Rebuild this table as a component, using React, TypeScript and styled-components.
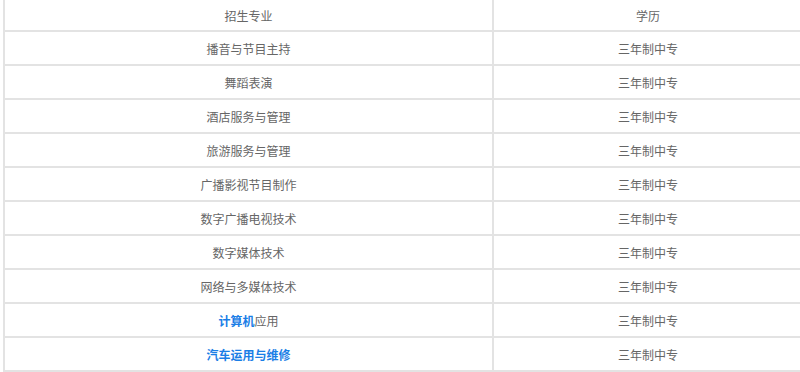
import React from "react";
import styled, { createGlobalStyle } from "styled-components";

const GlobalStyle = createGlobalStyle`
  body {
    margin: 0;
    background: #ffffff;
    font-family: "Microsoft YaHei", "Noto Sans CJK SC", sans-serif;
  }
`;

const Table = styled.div`
  margin-left: 3px;
  width: 797px;
  display: grid;
  grid-template-columns: 487px 1fr;
  border-left: 2px solid #e3e3e3;
`;

const Cell = styled.div<{ $first?: boolean; $header?: boolean }>`
  height: ${(p) => (p.$header ? 30 : 32)}px;
  display: flex;
  align-items: center;
  justify-content: center;
  border-bottom: 2px solid #e3e3e3;
  border-left: ${(p) => (p.$first ? "none" : "2px solid #e3e3e3")};
  font-size: 12px;
  color: #666666;
`;

const Hot = styled.strong`
  color: #1a7ee6;
  font-weight: bold;
`;

const rows: React.ReactNode[] = [
  "播音与节目主持",
  "舞蹈表演",
  "酒店服务与管理",
  "旅游服务与管理",
  "广播影视节目制作",
  "数字广播电视技术",
  "数字媒体技术",
  "网络与多媒体技术",
  <>
    <Hot>计算机</Hot>应用
  </>,
  <Hot>汽车运用与维修</Hot>,
];

export default function App() {
  return (
    <>
      <GlobalStyle />
      <Table>
        <Cell $first $header>
          招生专业
        </Cell>
        <Cell $header>学历</Cell>
        {rows.map((r, i) => (
          <React.Fragment key={i}>
            <Cell $first>{r}</Cell>
            <Cell>三年制中专</Cell>
          </React.Fragment>
        ))}
      </Table>
    </>
  );
}
